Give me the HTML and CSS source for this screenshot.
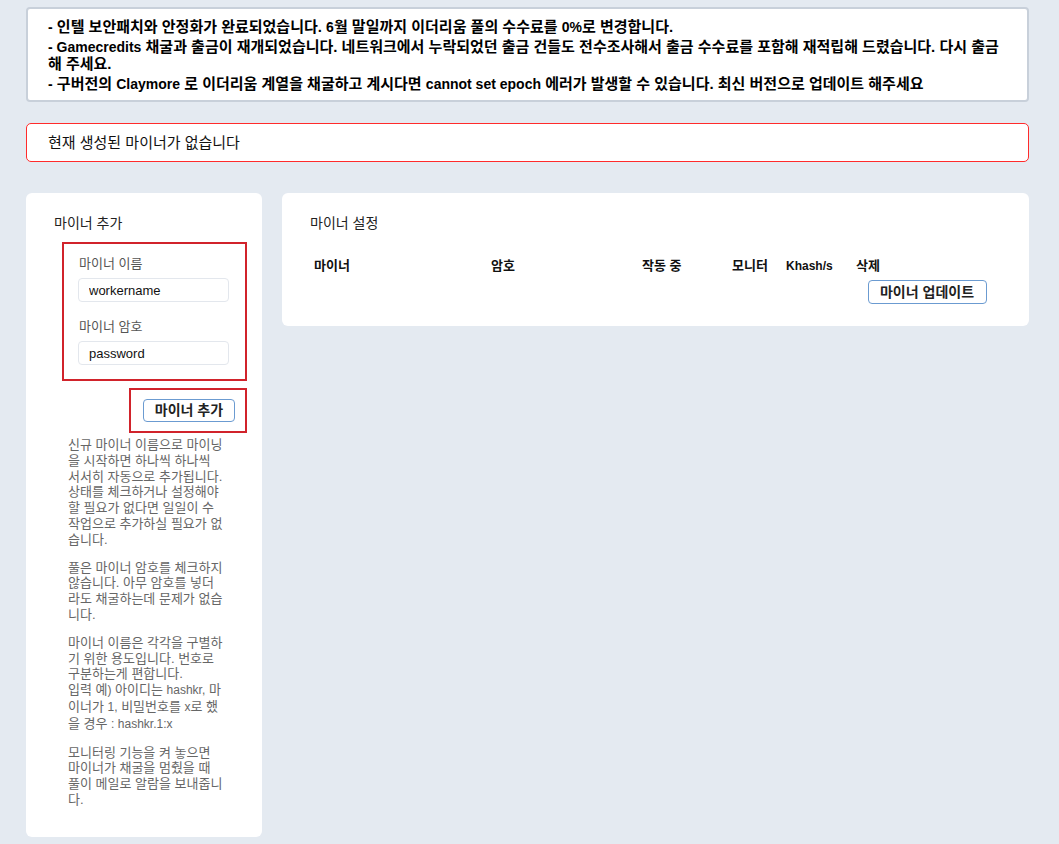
FILE: index.html
```html
<!DOCTYPE html>
<html lang="ko">
<head>
<meta charset="utf-8">
<title>마이너 설정</title>
<link rel="stylesheet" href="styles.css">
</head>
<body>
<div class="notice">
  <div class="notice-item"><span class="en">-</span> 인텔 보안패치와 안정화가 완료되었습니다. <span class="en">6</span>월 말일까지 이더리움 풀의 수수료를 <span class="en">0%</span>로 변경합니다.</div>
  <div class="notice-item"><span class="en">- Gamecredits</span> 채굴과 출금이 재개되었습니다. 네트워크에서 누락되었던 출금 건들도 전수조사해서 출금 수수료를 포함해 재적립해 드렸습니다. 다시 출금해 주세요.</div>
  <div class="notice-item"><span class="en">-</span> 구버전의 <span class="en">Claymore</span> 로 이더리움 계열을 채굴하고 계시다면 <span class="en">cannot set epoch</span> 에러가 발생할 수 있습니다. 최신 버전으로 업데이트 해주세요</div>
</div>

<div class="alert">현재 생성된 마이너가 없습니다</div>

<div class="columns">
  <div class="card card-left">
    <div class="card-title">마이너 추가</div>
    <div class="form-box">
      <label class="field-label">마이너 이름</label>
      <input class="field-input" type="text" value="workername">
      <label class="field-label second">마이너 암호</label>
      <input class="field-input" type="text" value="password">
    </div>
    <div class="button-box">
      <button class="btn">마이너 추가</button>
    </div>
    <div class="help">
      <p class="first">신규 마이너 이름으로 마이닝을 시작하면 하나씩 하나씩 서서히 자동으로 추가됩니다. 상태를 체크하거나 설정해야할 필요가 없다면 일일이 수작업으로 추가하실 필요가 없습니다.</p>
      <p>풀은 마이너 암호를 체크하지 않습니다. 아무 암호를 넣더라도 채굴하는데 문제가 없습니다.</p>
      <p>마이너 이름은 각각을 구별하기 위한 용도입니다. 번호로 구분하는게 편합니다.<br>입력 예<span class="en">)</span> 아이디는 <span class="en">hashkr,</span> 마이너가 <span class="en">1,</span> 비밀번호를 <span class="en">x</span>로 했을 경우 <span class="en">: hashkr.1:x</span></p>
      <p>모니터링 기능을 켜 놓으면 마이너가 채굴을 멈췄을 때 풀이 메일로 알람을 보내줍니다.</p>
    </div>
  </div>

  <div class="card card-right">
    <div class="card-title">마이너 설정</div>
    <div class="miner-table">
      <div class="th">마이너</div>
      <div class="th">암호</div>
      <div class="th">작동 중</div>
      <div class="th">모니터</div>
      <div class="th"><span class="en">Khash/s</span></div>
      <div class="th">삭제</div>
      <div class="update-cell"><button class="btn btn-update">마이너 업데이트</button></div>
    </div>
  </div>
</div>
</body>
</html>
```

FILE: styles.css
```css
* { box-sizing: border-box; }

html, body {
  margin: 0;
  background: #e4eaf1;
}

body {
  padding: 7px 30px 0 26px;
  font-family: "Liberation Sans", "Noto Sans CJK KR", sans-serif;
  color: #111;
}

.notice {
  background: #fff;
  border: 2px solid #c8d0da;
  border-radius: 4px;
  padding: 10px 20px 8px 20px;
  display: flex;
  flex-direction: column;
  gap: 3.5px;
  font-size: 15px;
  font-weight: bold;
  line-height: 16.5px;
  color: #000;
}

.notice .en {
  font-size: 14px;
}

.alert {
  margin-top: 21px;
  background: #fff;
  border: 1px solid #ff2b2b;
  border-radius: 5px;
  padding: 0 21px;
  height: 39px;
  line-height: 37px;
  font-size: 15px;
  color: #111;
}

.columns {
  margin-top: 31px;
  display: flex;
  align-items: flex-start;
  gap: 20px;
}

.card {
  background: #fff;
  border-radius: 6px;
}

.card-left {
  width: 236px;
  flex: none;
  padding: 21px 15px 29px 28px;
}

.card-right {
  flex: 1;
  padding: 21px 27px 22px 28px;
}

.card-title {
  font-size: 14px;
  line-height: 18px;
  color: #222;
}

.form-box {
  margin: 10px 0 0 8px;
  border: 2px solid #d1232b;
  padding: 12px 16px 14px 15px;
  display: flex;
  flex-direction: column;
}

.field-label {
  font-size: 13px;
  line-height: 16px;
  color: #555;
}

.field-label.second {
  margin-top: 17px;
}

.field-input {
  margin: 6px 0 0 -1px;
  width: 151px;
  height: 24px;
  border: 1px solid #e3e7ed;
  border-radius: 4px;
  padding: 0 10px;
  font-family: "Liberation Sans", "Noto Sans CJK KR", sans-serif;
  font-size: 13px;
  color: #111;
  outline: none;
}

.button-box {
  margin: 7px 0 0 auto;
  width: 118px;
  border: 2px solid #d1232b;
  padding: 9px 10px 9px 12px;
  display: flex;
  justify-content: flex-end;
}

.btn {
  height: 23px;
  padding: 0 10px;
  background: #fff;
  border: 1px solid #6b9bd1;
  border-radius: 4px;
  font-family: "Liberation Sans", "Noto Sans CJK KR", sans-serif;
  font-size: 14px;
  font-weight: bold;
  color: #222;
  line-height: 21px;
}

.button-box .btn {
  width: 92px;
  padding: 0;
}

.help {
  margin-left: 14px;
  width: 156px;
  font-size: 13px;
  line-height: 15.8px;
  color: #666;
}

.help .en {
  font-size: 12px;
}

.help p {
  margin: 12px 0 0;
}

.help p.first {
  margin-top: 4px;
}

.miner-table {
  margin-top: 26px;
  display: grid;
  grid-template-columns: 177px 151px 90px 54px 70px 150px;
}

.th {
  padding-left: 4px;
  font-size: 13px;
  font-weight: bold;
  line-height: 15px;
  color: #111;
}

.th .en {
  font-size: 12px;
}

.update-cell {
  grid-column: 6;
  margin-top: 6px;
  display: flex;
  justify-content: center;
}

.btn-update {
  width: 119px;
  height: 24px;
  padding: 0;
}
```
